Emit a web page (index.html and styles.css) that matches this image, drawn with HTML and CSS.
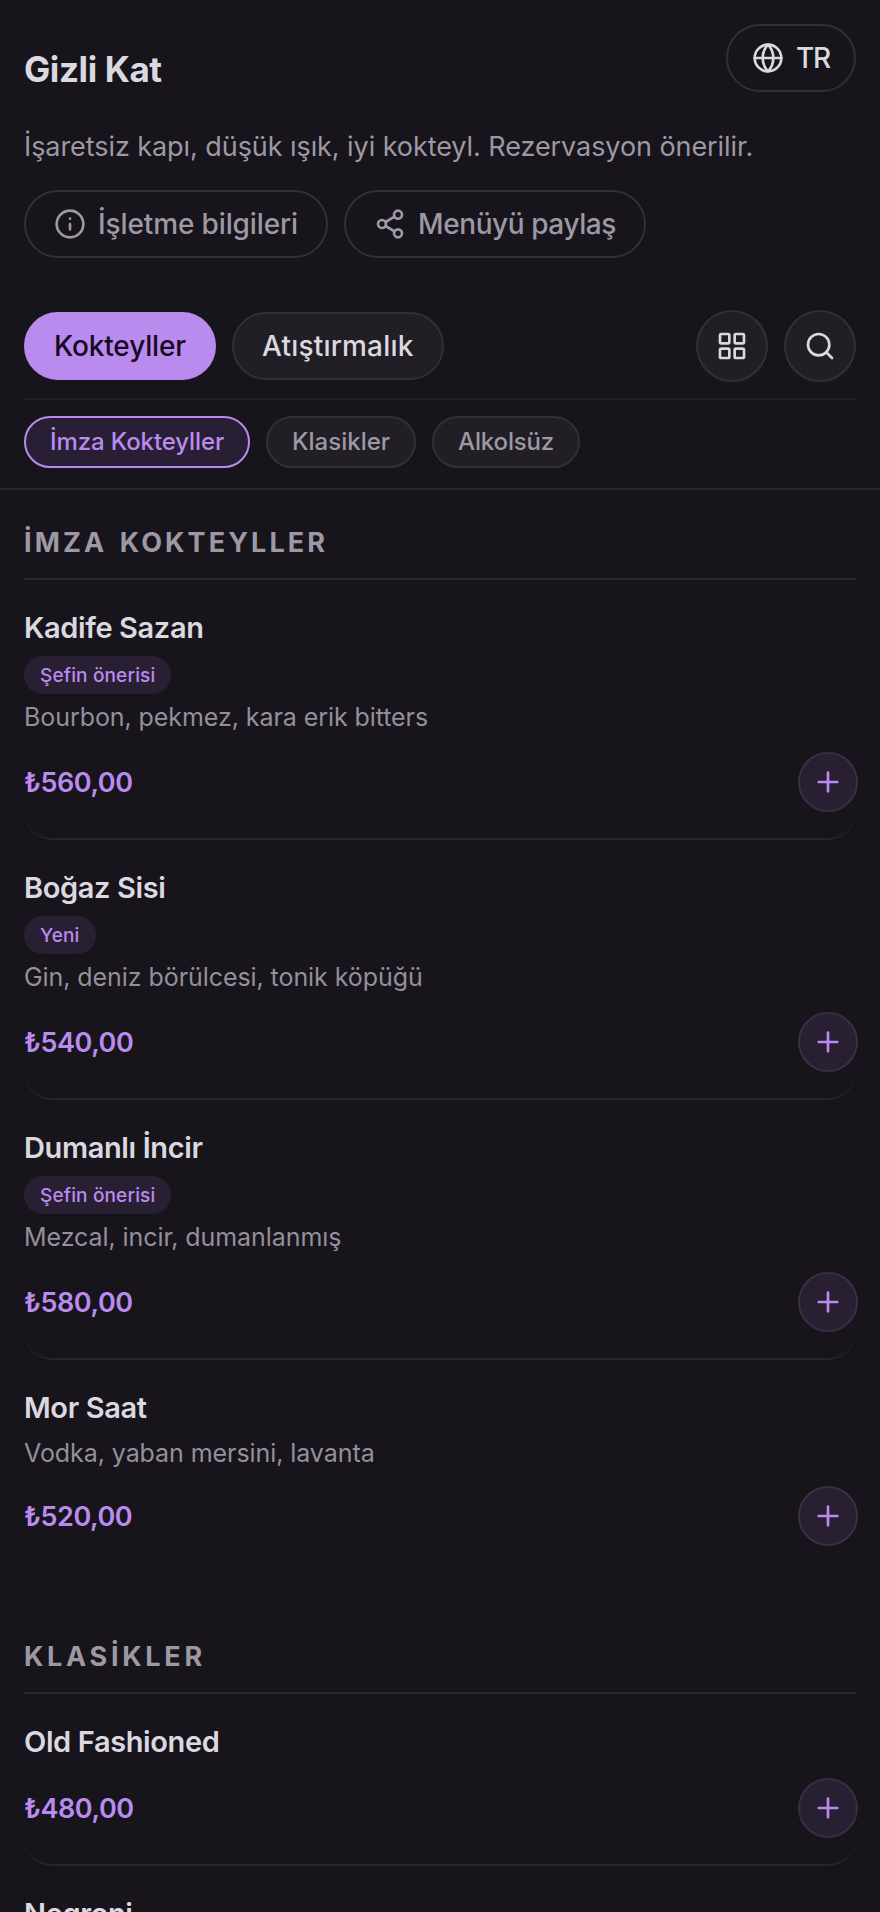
FILE: index.html
```
<!DOCTYPE html>
<html lang="tr">
<head>
<meta charset="utf-8">
<title>Gizli Kat</title>
<link rel="stylesheet" href="styles.css">
</head>
<body>
<svg class="defs" aria-hidden="true">
  <symbol id="plus" viewBox="0 0 24 24"><path d="M5 12h14M12 5v14"/></symbol>
</svg>
<header class="hero">
  <div class="hero-top">
    <h1 class="title">Gizli Kat</h1>
    <button class="pill pill-lang"><svg class="icon" viewBox="0 0 24 24"><circle cx="12" cy="12" r="10"/><path d="M12 2a14.5 14.5 0 0 0 0 20 14.5 14.5 0 0 0 0-20M2 12h20"/></svg>TR</button>
  </div>
  <p class="tagline">İşaretsiz kapı, düşük ışık, iyi kokteyl. Rezervasyon önerilir.</p>
  <div class="actions">
    <button class="pill pill-info"><svg class="icon" viewBox="0 0 24 24"><circle cx="12" cy="12" r="10"/><path d="M12 16v-4M12 8h.01"/></svg>İşletme bilgileri</button>
    <button class="pill pill-share"><svg class="icon" viewBox="0 0 24 24"><circle cx="18" cy="5" r="3"/><circle cx="6" cy="12" r="3"/><circle cx="18" cy="19" r="3"/><path d="M8.59 13.51l6.83 3.98M15.41 6.51l-6.82 3.98"/></svg>Menüyü paylaş</button>
  </div>
</header>
<nav class="nav">
  <div class="tabs">
    <button class="pill tab tab-on">Kokteyller</button>
    <button class="pill tab">Atıştırmalık</button>
    <button class="round round-first" aria-label="Görünüm"><svg class="icon" viewBox="0 0 24 24"><rect x="3" y="3" width="7" height="7" rx="1"/><rect x="14" y="3" width="7" height="7" rx="1"/><rect x="14" y="14" width="7" height="7" rx="1"/><rect x="3" y="14" width="7" height="7" rx="1"/></svg></button>
    <button class="round" aria-label="Ara"><svg class="icon" viewBox="0 0 24 24"><circle cx="11" cy="11" r="8"/><path d="M21 21l-4.34-4.34"/></svg></button>
  </div>
  <div class="chips">
    <button class="chip chip-on">İmza Kokteyller</button>
    <button class="chip">Klasikler</button>
    <button class="chip chip-last">Alkolsüz</button>
  </div>
</nav>
<main class="menu">
  <section class="section">
    <h2 class="heading">İMZA KOKTEYLLER</h2>
    <article class="item">
      <h3 class="name">Kadife Sazan</h3>
      <span class="badge">Şefin önerisi</span>
      <p class="desc">Bourbon, pekmez, kara erik bitters</p>
      <div class="buy"><span class="price">₺560,00</span><button class="add" aria-label="Ekle"><svg class="icon"><use href="#plus"/></svg></button></div>
    </article>
    <article class="item">
      <h3 class="name">Boğaz Sisi</h3>
      <span class="badge">Yeni</span>
      <p class="desc">Gin, deniz börülcesi, tonik köpüğü</p>
      <div class="buy"><span class="price">₺540,00</span><button class="add" aria-label="Ekle"><svg class="icon"><use href="#plus"/></svg></button></div>
    </article>
    <article class="item">
      <h3 class="name">Dumanlı İncir</h3>
      <span class="badge">Şefin önerisi</span>
      <p class="desc">Mezcal, incir, dumanlanmış</p>
      <div class="buy"><span class="price">₺580,00</span><button class="add" aria-label="Ekle"><svg class="icon"><use href="#plus"/></svg></button></div>
    </article>
    <article class="item item-plain">
      <h3 class="name">Mor Saat</h3>
      <p class="desc">Vodka, yaban mersini, lavanta</p>
      <div class="buy"><span class="price">₺520,00</span><button class="add" aria-label="Ekle"><svg class="icon"><use href="#plus"/></svg></button></div>
    </article>
  </section>
  <section class="section">
    <h2 class="heading">KLASİKLER</h2>
    <article class="item item-short">
      <h3 class="name">Old Fashioned</h3>
      <div class="buy"><span class="price">₺480,00</span><button class="add" aria-label="Ekle"><svg class="icon"><use href="#plus"/></svg></button></div>
    </article>
    <article class="item item-short">
      <h3 class="name">Negroni</h3>
    </article>
  </section>
</main>
</body>
</html>
```
FILE: styles.css
```
* { box-sizing: border-box; margin: 0; }

body {
  height: 1912px;
  overflow: hidden;
  background: #17141b;
  color: #dcd8e0;
  font-family: Inter, sans-serif;
}

button { font-family: inherit; color: inherit; background: none; padding: 0; }

.defs { display: none; }

.icon {
  flex: none;
  width: 32px;
  height: 32px;
  fill: none;
  stroke: currentColor;
  stroke-width: 2;
  stroke-linecap: round;
  stroke-linejoin: round;
}

/* Header */
.hero { padding: 24px 24px 0; }
.hero-top { display: flex; justify-content: space-between; align-items: flex-start; height: 92px; }
.title { font-size: 35px; font-weight: 700; line-height: 91px; letter-spacing: -0.4px; }
.tagline { color: #9d98a4; font-size: 27px; line-height: 62px; letter-spacing: -0.07px; white-space: nowrap; }
.actions { display: flex; gap: 16px; margin-top: 12px; color: #9d98a4; }

.pill {
  display: flex;
  align-items: center;
  gap: 12px;
  height: 68px;
  padding: 0 28px;
  border: 2px solid #322f37;
  border-radius: 34px;
  font-size: 28px;
  font-weight: 500;
  white-space: nowrap;
}
.pill-lang { padding: 0 24px; letter-spacing: -1.2px; }
.pill-info { letter-spacing: -0.12px; }
.pill-share { letter-spacing: -0.42px; }

/* Category navigation */
.nav { margin-top: 52px; padding: 0 24px 20px; border-bottom: 2px solid #27242b; }
.tabs { display: flex; align-items: center; gap: 16px; padding-bottom: 16px; border-bottom: 2px solid #232027; }
.tab { background: #211e26; letter-spacing: 0.2px; }
.tab-on { background: #ba8bee; border-color: #ba8bee; color: #160a24; letter-spacing: -0.15px; }
.round {
  display: flex;
  align-items: center;
  justify-content: center;
  width: 72px;
  height: 72px;
  border: 2px solid #322f37;
  border-radius: 50%;
  background: #211e26;
}
.round-first { margin-left: auto; }

.chips { display: flex; gap: 16px; padding-top: 16px; }
.chip {
  height: 52px;
  padding: 0 24px 1px;
  border: 2px solid #322f37;
  border-radius: 26px;
  background: #211e26;
  color: #9d98a4;
  font-size: 24px;
  font-weight: 500;
}
.chip-on { background: #291f35; border-color: #ba8bee; color: #ba8bee; letter-spacing: -0.11px; }
.chip-last { letter-spacing: -0.15px; }

/* Menu */
.menu { padding: 0 24px; }
.section + .section { margin-top: 32px; }
.heading {
  padding-top: 18px;
  border-bottom: 2px solid #2a272e;
  color: #9d98a4;
  font-size: 27px;
  font-weight: 700;
  line-height: 70px;
  letter-spacing: 3.7px;
}
.section:first-child .heading { letter-spacing: 3.1px; word-spacing: 3px; }
.item { padding: 28px 0 26px; border-bottom: 2px solid #27242b; border-radius: 28px; }
.section:first-child .item:last-child { border-bottom: 0; }
.name { font-size: 29px; font-weight: 600; line-height: 40px; letter-spacing: -0.38px; }
.badge {
  display: block;
  width: fit-content;
  height: 38px;
  margin-top: 8px;
  padding: 1px 16px 0;
  border-radius: 19px;
  background: #291f33;
  color: #ba8bee;
  font-size: 19px;
  font-weight: 500;
  line-height: 38px;
  letter-spacing: 0.15px;
}
.desc { margin-top: 5px; color: #948f9b; font-size: 25px; line-height: 36px; letter-spacing: -0.07px; }
.buy { display: flex; align-items: center; justify-content: space-between; margin: 17px -2px 0 0; }
.item-plain .desc { margin-top: 7px; }
.item-plain .buy { margin-top: 15px; }
.item-short .buy { margin-top: 16px; }
.price { color: #ba8bee; font-size: 27px; font-weight: 600; letter-spacing: -0.45px; }
.add {
  display: flex;
  align-items: center;
  justify-content: center;
  width: 60px;
  height: 60px;
  border: 2px solid #382f42;
  border-radius: 50%;
  background: #291f33;
  color: #ba8bee;
}
```
